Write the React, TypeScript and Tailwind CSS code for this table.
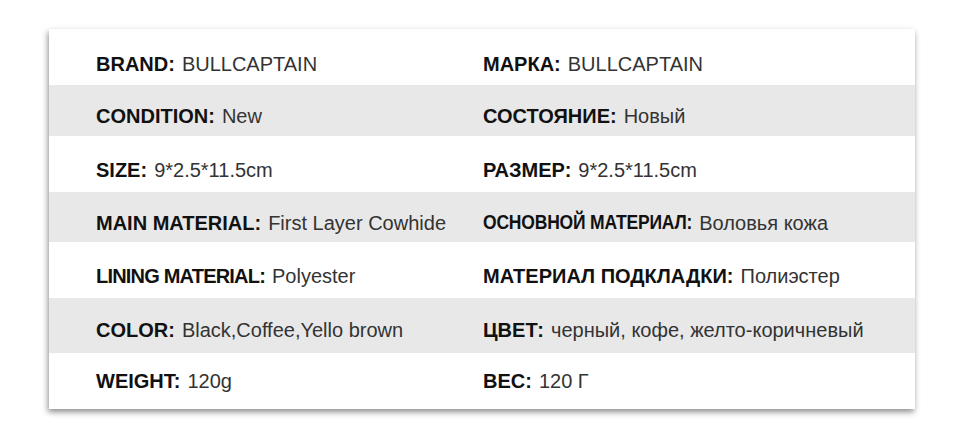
import React from 'react';

type Spec = { label: string; value: string; tight?: 'squeeze' | 'narrow' };

const rows: { h: string; pt: string; gray: boolean; left: Spec; right: Spec }[] = [
  {
    h: 'h-[56px]',
    pt: 'pt-[13px]',
    gray: false,
    left: { label: 'BRAND:', value: 'BULLCAPTAIN' },
    right: { label: 'МАРКА:', value: 'BULLCAPTAIN' },
  },
  {
    h: 'h-[51px]',
    pt: 'pt-[11px]',
    gray: true,
    left: { label: 'CONDITION:', value: 'New' },
    right: { label: 'СОСТОЯНИЕ:', value: 'Новый' },
  },
  {
    h: 'h-[56px]',
    pt: 'pt-[11px]',
    gray: false,
    left: { label: 'SIZE:', value: '9*2.5*11.5cm' },
    right: { label: 'РАЗМЕР:', value: '9*2.5*11.5cm' },
  },
  {
    h: 'h-[50px]',
    pt: 'pt-[11px]',
    gray: true,
    left: { label: 'MAIN MATERIAL:', value: 'First Layer Cowhide' },
    right: { label: 'ОСНОВНОЙ МАТЕРИАЛ:', value: 'Воловья кожа', tight: 'narrow' },
  },
  {
    h: 'h-[56px]',
    pt: 'pt-[12px]',
    gray: false,
    left: { label: 'LINING MATERIAL:', value: 'Polyester', tight: 'squeeze' },
    right: { label: 'МАТЕРИАЛ ПОДКЛАДКИ:', value: 'Полиэстер' },
  },
  {
    h: 'h-[55px]',
    pt: 'pt-[8px]',
    gray: true,
    left: { label: 'COLOR:', value: 'Black,Coffee,Yello brown' },
    right: { label: 'ЦВЕТ:', value: 'черный, кофе, желто-коричневый' },
  },
  {
    h: 'h-[56px]',
    pt: 'pt-0',
    gray: false,
    left: { label: 'WEIGHT:', value: '120g' },
    right: { label: 'ВЕС:', value: '120 Г' },
  },
];

function Label({ spec }: { spec: Spec }) {
  if (spec.tight === 'narrow') {
    return (
      <span className="inline-block origin-left scale-y-[1.16] text-[17.5px] font-bold text-[#111] tracking-[-0.2px]">
        {spec.label}
      </span>
    );
  }
  if (spec.tight === 'squeeze') {
    return <span className="text-[20px] font-bold text-[#111] tracking-[-0.8px]">{spec.label}</span>;
  }
  return <span className="text-[20px] font-bold text-[#111]">{spec.label}</span>;
}

function Cell({ spec }: { spec: Spec }) {
  return (
    <div className="flex items-center whitespace-nowrap">
      <Label spec={spec} />
      <span className="ml-[7px] text-[20px] text-[#333]">{spec.value}</span>
    </div>
  );
}

export default function App() {
  return (
    <div className="w-[960px] h-[430px] bg-white pt-[29px] pl-[49px] font-['Liberation_Sans',Arial,sans-serif]">
      <div className="w-[866px] bg-white shadow-[-1px_3px_6px_rgba(0,0,0,0.45)]">
        {rows.map((row, i) => (
          <div
            key={i}
            className={`grid grid-cols-[387px_1fr] pl-[47px] leading-none ${row.h} ${row.pt} ${
              row.gray ? 'bg-[#e8e8e8]' : 'bg-white'
            }`}
          >
            <Cell spec={row.left} />
            <Cell spec={row.right} />
          </div>
        ))}
      </div>
    </div>
  );
}
